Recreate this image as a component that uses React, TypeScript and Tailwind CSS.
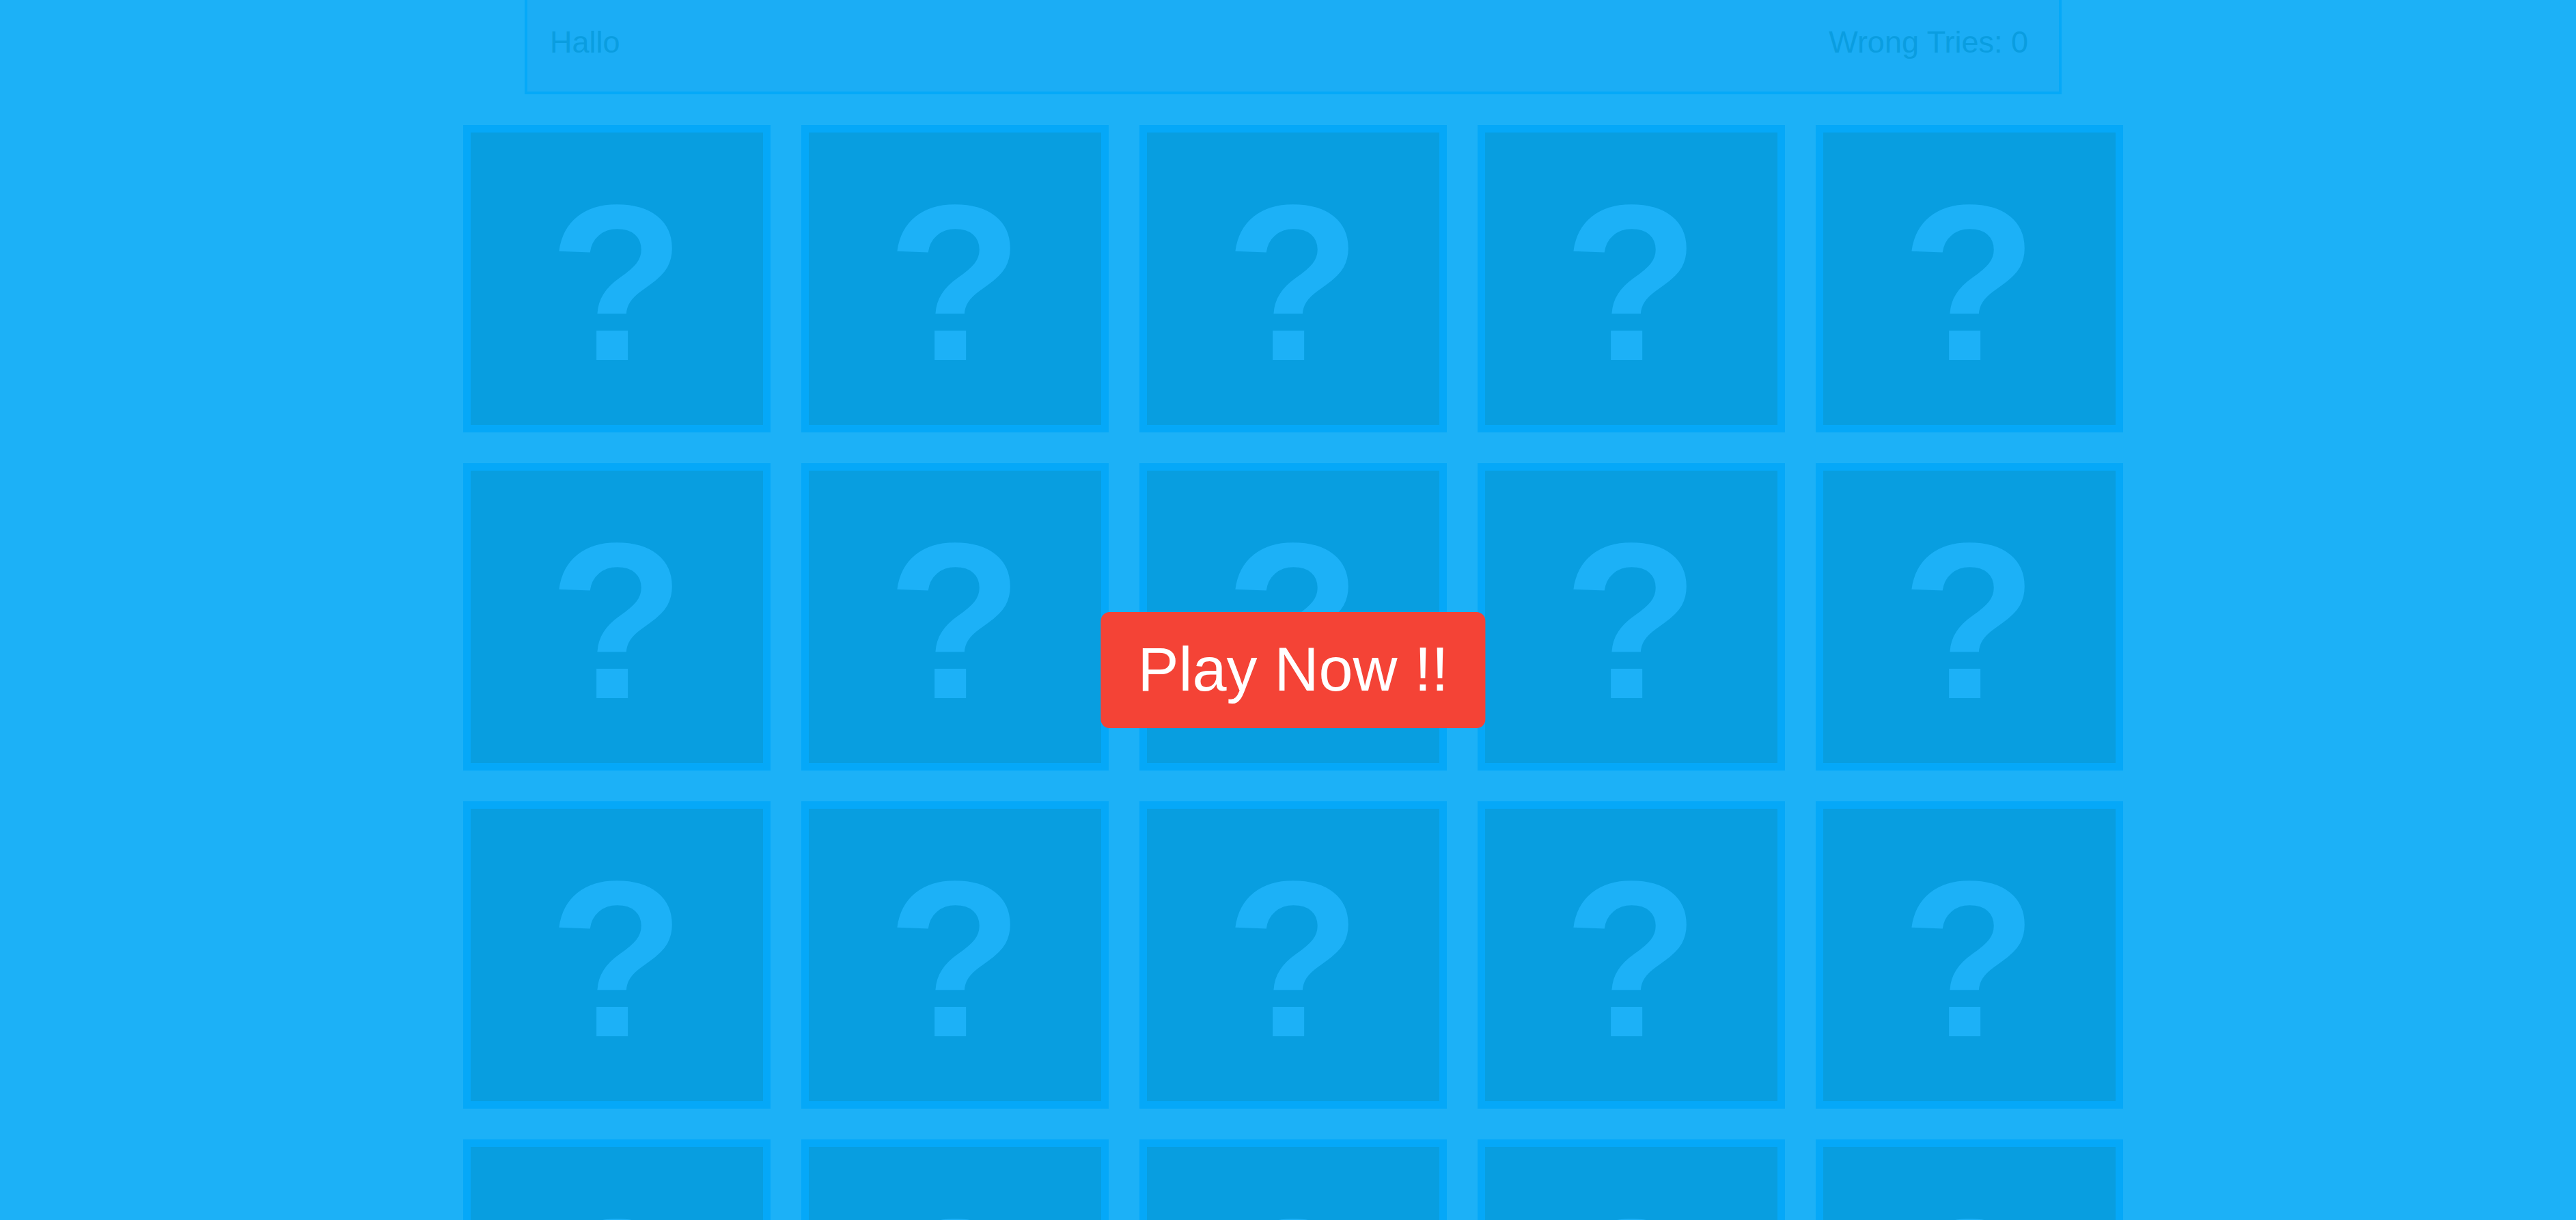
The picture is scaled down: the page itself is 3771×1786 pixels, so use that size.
import React from "react";

const cards = Array.from({ length: 20 }, (_, i) => i);

function Card() {
  return (
    <div className="flex h-[450px] w-[450px] items-center justify-center border-[11px] border-[#05a8f8] bg-[#089ee0]">
      <span className="mt-[12px] select-none font-['Liberation_Sans',Arial,sans-serif] text-[326px] font-bold leading-none text-[#1cb1f7]">
        ?
      </span>
    </div>
  );
}

export default function App() {
  return (
    <div className="min-h-screen bg-[#1cb1f7] font-['Liberation_Sans',Arial,sans-serif]">
      <div className="flex justify-center pl-[15px]">
        <div className="relative w-[2430px]">
          {/* Status bar */}
          <div className="mx-[90px] flex h-[138px] items-start justify-between border-x-4 border-b-4 border-[#05a9f8] bg-[#1badf5] pl-[33px] pr-[45px] pt-[36px] text-[45px] leading-[1.15] text-[#0a9de0]">
            <span>Hallo</span>
            <span>Wrong Tries: 0</span>
          </div>

          {/* Board */}
          <div className="mt-[45px] grid grid-cols-5 gap-[45px]">
            {cards.map((c) => (
              <Card key={c} />
            ))}
          </div>

          {/* Overlay button */}
          <button className="absolute left-1/2 top-[896px] h-[170px] -translate-x-1/2 rounded-[13px] bg-[#f44336] px-[54px] pb-[3px] text-[90px] leading-[104px] text-white whitespace-nowrap">
            Play Now !!
          </button>
        </div>
      </div>
    </div>
  );
}
